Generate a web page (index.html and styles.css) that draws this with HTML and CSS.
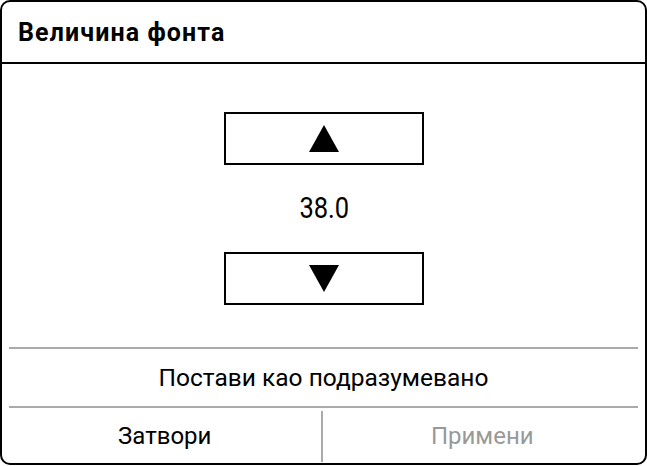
FILE: index.html
```html
<!DOCTYPE html>
<html>
<head>
<meta charset="utf-8">
<link rel="stylesheet" href="styles.css">
</head>
<body>
<div class="dialog">
  <div class="header"><span class="title">Величина фонта</span></div>
  <div class="content">
    <div class="step-btn">
      <svg width="30" height="27" viewBox="0 0 30 27"><polygon points="15,0 30,27 0,27" fill="#000"/></svg>
    </div>
    <div class="value"><span class="value-text">38.0</span></div>
    <div class="step-btn">
      <svg width="30" height="27" viewBox="0 0 30 27"><polygon points="0,0 30,0 15,27" fill="#000"/></svg>
    </div>
  </div>
  <div class="footer">
    <div class="row default-row">Постави као подразумевано</div>
    <div class="row actions">
      <div class="action">Затвори</div>
      <div class="vsep"></div>
      <div class="action disabled">Примени</div>
    </div>
  </div>
</div>
</body>
</html>
```
FILE: styles.css
```css
html, body {
  margin: 0;
  padding: 0;
  background: #fff;
}
body {
  font-family: Roboto, "Liberation Sans", sans-serif;
  color: #000;
}
.dialog {
  box-sizing: border-box;
  width: 647px;
  height: 465px;
  border: 2px solid #000;
  border-radius: 10px;
  display: flex;
  flex-direction: column;
  overflow: hidden;
}
.header {
  height: 60px;
  border-bottom: 2px solid #000;
  display: flex;
  align-items: center;
  padding-left: 16px;
}
.title {
  font-weight: 700;
  font-size: 25px;
  letter-spacing: 1.1px;
}
.content {
  flex: 1;
  display: flex;
  flex-direction: column;
  align-items: center;
  padding-top: 48px;
  padding-left: 1px;
}
.step-btn {
  box-sizing: border-box;
  width: 200px;
  height: 53px;
  border: 2px solid #000;
  display: flex;
  align-items: center;
  justify-content: center;
}
.value {
  height: 87px;
  display: flex;
  align-items: center;
  justify-content: center;
  padding-bottom: 2px;
  box-sizing: border-box;
}
.value-text {
  display: inline-block;
  font-size: 30px;
  transform: scaleX(0.85);
}
.footer {
  margin: 0 7px;
}
.row {
  border-top: 2px solid #aaa;
}
.default-row {
  height: 57px;
  display: flex;
  align-items: center;
  justify-content: center;
  font-size: 24.5px;
}
.actions {
  height: 55px;
  display: flex;
}
.action {
  flex: 1;
  display: flex;
  align-items: center;
  justify-content: center;
  font-size: 24px;
}
.action.disabled {
  color: #999;
  padding-left: 4px;
}
.vsep {
  width: 2px;
  background: #aaa;
  margin: 3px 0 1px;
}
```
